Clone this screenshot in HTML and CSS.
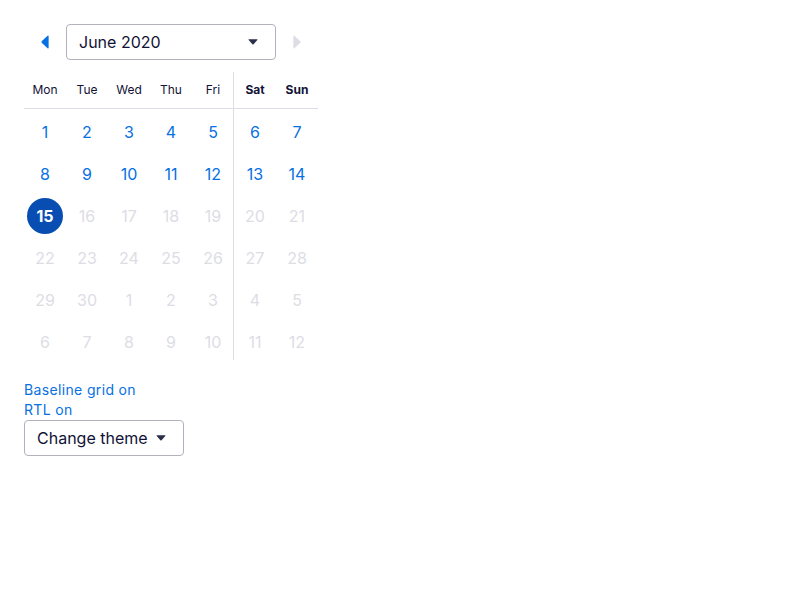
FILE: index.html
```html
<!DOCTYPE html>
<html lang="en">
<head>
<meta charset="utf-8">
<title>Calendar</title>
<link rel="stylesheet" href="styles.css">
</head>
<body>
<div class="page">
  <div class="calendar">
    <div class="nav">
      <button class="nav-btn" aria-label="Previous month">
        <svg width="8" height="14" viewBox="0 0 8 14"><path d="M6.6 0.8 L0.9 6.1 Q0 7 0.9 7.9 L6.6 13.2 Q7.6 14 7.6 12.6 L7.6 1.4 Q7.6 0 6.6 0.8 Z" fill="#0770e3"/></svg>
      </button>
      <div class="select month-select">
        <span>June 2020</span>
        <svg class="caret" width="10" height="6" viewBox="0 0 10 6"><path d="M1 0.3 H9 Q9.9 0.3 9.3 1 L5.6 5.2 Q5 5.9 4.4 5.2 L0.7 1 Q0.1 0.3 1 0.3 Z" fill="#2d2e4a"/></svg>
      </div>
      <button class="nav-btn" aria-label="Next month">
        <svg width="8" height="14" viewBox="0 0 8 14"><path d="M1.4 0.8 L7.1 6.1 Q8 7 7.1 7.9 L1.4 13.2 Q0.4 14 0.4 12.6 L0.4 1.4 Q0.4 0 1.4 0.8 Z" fill="#dddde5"/></svg>
      </button>
    </div>
    <div class="month">
      <div class="section weekdays">
        <div class="head">
          <span>Mon</span><span>Tue</span><span>Wed</span><span>Thu</span><span>Fri</span>
        </div>
        <div class="days">
          <span class="day">1</span><span class="day">2</span><span class="day">3</span><span class="day">4</span><span class="day">5</span>
          <span class="day">8</span><span class="day">9</span><span class="day">10</span><span class="day">11</span><span class="day">12</span>
          <span class="day selected"><b>15</b></span><span class="day off">16</span><span class="day off">17</span><span class="day off">18</span><span class="day off">19</span>
          <span class="day off">22</span><span class="day off">23</span><span class="day off">24</span><span class="day off">25</span><span class="day off">26</span>
          <span class="day off">29</span><span class="day off">30</span><span class="day off">1</span><span class="day off">2</span><span class="day off">3</span>
          <span class="day off">6</span><span class="day off">7</span><span class="day off">8</span><span class="day off">9</span><span class="day off">10</span>
        </div>
      </div>
      <div class="section weekend">
        <div class="head bold">
          <span>Sat</span><span>Sun</span>
        </div>
        <div class="days">
          <span class="day">6</span><span class="day">7</span>
          <span class="day">13</span><span class="day">14</span>
          <span class="day off">20</span><span class="day off">21</span>
          <span class="day off">27</span><span class="day off">28</span>
          <span class="day off">4</span><span class="day off">5</span>
          <span class="day off">11</span><span class="day off">12</span>
        </div>
      </div>
    </div>
  </div>
  <div class="controls">
    <a class="link">Baseline grid on</a>
    <a class="link">RTL on</a>
    <div class="select theme-select">
      <span>Change theme</span>
      <svg class="caret" width="10" height="6" viewBox="0 0 10 6"><path d="M1 0.3 H9 Q9.9 0.3 9.3 1 L5.6 5.2 Q5 5.9 4.4 5.2 L0.7 1 Q0.1 0.3 1 0.3 Z" fill="#2d2e4a"/></svg>
    </div>
  </div>
</div>
</body>
</html>
```
FILE: styles.css
```css
* { box-sizing: border-box; }
html, body { margin: 0; padding: 0; background: #fff; }
body {
  font-family: Inter, "Noto Sans", "Liberation Sans", sans-serif;
  color: #111236;
}
.page { padding: 24px; }
.calendar { width: 294px; }
.nav {
  display: flex;
  align-items: center;
  height: 36px;
}
.nav-btn {
  width: 42px;
  height: 36px;
  border: 0;
  background: none;
  padding: 0;
  display: flex;
  align-items: center;
  justify-content: center;
}
.select {
  display: flex;
  align-items: center;
  justify-content: space-between;
  height: 36px;
  border: 1px solid #b2b2bf;
  border-radius: 4px;
  padding: 0 17px 0 12px;
  font-size: 16px;
  color: #111236;
}
.month-select { width: 210px; }
.caret { display: block; }
.month {
  display: flex;
  margin-top: 12px;
}
.section { display: flex; flex-direction: column; }
.weekdays { width: 210px; border-right: 1px solid #dddde5; }
.weekend { width: 84px; }
.head {
  display: grid;
  grid-auto-flow: column;
  grid-auto-columns: 42px;
  height: 37px;
  border-bottom: 1px solid #dddde5;
  align-items: center;
  font-size: 12px;
  padding-bottom: 1px;
}
.weekdays .head { grid-template-columns: repeat(5, 42px); }
.head span { text-align: center; }
.head.bold { font-weight: 700; }
.days {
  display: grid;
  grid-template-columns: repeat(5, 42px);
  row-gap: 6px;
  padding-top: 5px;
}
.weekend .days { grid-template-columns: repeat(2, 42px); }
.day {
  height: 36px;
  display: flex;
  align-items: center;
  justify-content: center;
  font-size: 16px;
  color: #0770e3;
}
.day.off { color: #dddde5; }
.day.selected b {
  width: 36px;
  height: 36px;
  border-radius: 50%;
  background: #084eb2;
  color: #fff;
  display: flex;
  align-items: center;
  justify-content: center;
  font-weight: 700;
}
.controls {
  margin-top: 20px;
  display: flex;
  flex-direction: column;
  align-items: flex-start;
}
.link {
  font-size: 14px;
  line-height: 20px;
  color: #0770e3;
  letter-spacing: 0.35px;
}
.theme-select { width: 160px; padding-right: 17px; }
```
